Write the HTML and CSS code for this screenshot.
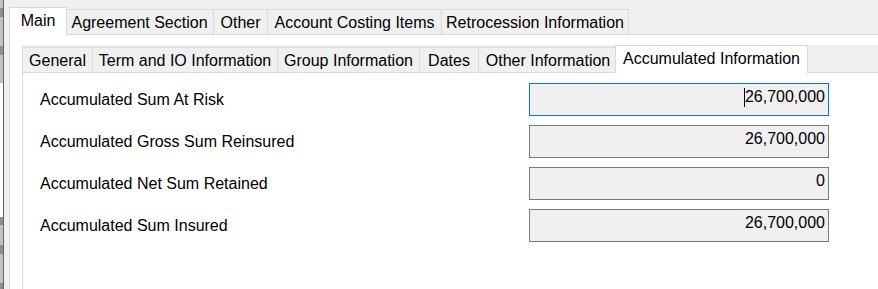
FILE: index.html
```html
<!DOCTYPE html>
<html lang="en">
<head>
  <meta charset="UTF-8" />
  <title>Accumulated Information</title>
  <link rel="stylesheet" href="styles.css">
</head>
<body>
  <div class="side-strip"></div>
  <div class="side-edge"></div>
  <div class="window">
    <div class="tabs outer-tabs">
      <div class="tab tab-main selected">Main</div>
      <div class="tab tab-agreement">Agreement Section</div>
      <div class="tab tab-other">Other</div>
      <div class="tab tab-costing">Account Costing Items</div>
      <div class="tab tab-retro">Retrocession Information</div>
    </div>
    <div class="panel outer-panel">
      <div class="tabs inner-tabs">
        <div class="tab tab-general">General</div>
        <div class="tab tab-term">Term and IO Information</div>
        <div class="tab tab-group">Group Information</div>
        <div class="tab tab-dates">Dates</div>
        <div class="tab tab-otherinfo">Other Information</div>
        <div class="tab tab-accum selected">Accumulated Information</div>
      </div>
      <div class="panel inner-panel">
        <div class="fields">
          <div class="label">Accumulated Sum At Risk</div>
          <div class="box focused"><span class="caret"></span>26,700,000</div>
          <div class="label">Accumulated Gross Sum Reinsured</div>
          <div class="box">26,700,000</div>
          <div class="label">Accumulated Net Sum Retained</div>
          <div class="box">0</div>
          <div class="label">Accumulated Sum Insured</div>
          <div class="box">26,700,000</div>
        </div>
      </div>
    </div>
  </div>
</body>
</html>
```
FILE: styles.css
```css
html, body {
  margin: 0;
  padding: 0;
  height: 100%;
  overflow: hidden;
}
body {
  display: flex;
  background: #f0f0f0;
  color: #000;
  font-family: "Liberation Sans", Arial, sans-serif;
  font-size: 16px;
}
.side-strip {
  width: 3px;
  flex: none;
  background: linear-gradient(to bottom,
    #c2c2c2 0 8px, #8e8e8e 8px 17px, #c2c2c2 17px 46px,
    #8e8e8e 46px 55px, #c2c2c2 55px 83px, #ffffff 83px 217px,
    #8e8e8e 217px 225px, #c2c2c2 225px 245px, #8e8e8e 245px 254px,
    #c2c2c2 254px 283px, #8e8e8e 283px);
}
.side-edge {
  width: 1px;
  flex: none;
  background: #646464;
}
.window {
  flex: 1;
  display: flex;
  flex-direction: column;
  padding: 7px 0 0 5px;
  min-width: 0;
}

/* tab strips */
.tabs {
  display: flex;
  align-items: flex-end;
  height: 27px;
  flex: none;
}
.outer-tabs {
  padding-left: 2px;
}
.inner-tabs {
  background: #f0f0f0;
}
.tab {
  box-sizing: border-box;
  height: 25px;
  display: flex;
  align-items: center;
  justify-content: center;
  padding-top: 1px;
  white-space: nowrap;
  background: #f0f0f0;
  border-top: 1px solid #d9d9d9;
  border-left: 1px solid #d9d9d9;
}
.tab:last-child {
  border-right: 1px solid #d9d9d9;
}
.tab.selected {
  position: relative;
  z-index: 1;
  height: 28px;
  margin: 0 -2px -1px;
  padding-top: 0;
  padding-bottom: 2px;
  background: #fff;
  border-right: 1px solid #d9d9d9;
}

.tab-main { width: 54px; }
.tab-main.selected { width: 58px; }
.tab-agreement { width: 148px; }
.tab-other { width: 54px; }
.tab-costing { width: 174px; }
.tab-retro { width: 188px; }

.tab-general { width: 70px; }
.tab-term { width: 185px; }
.tab-group { width: 142px; }
.tab-dates { width: 59px; }
.tab-otherinfo { width: 139px; }
.tab-accum.selected { width: 193px; }

/* panels */
.panel {
  flex: 1;
  display: flex;
  flex-direction: column;
  background: #fff;
  border-top: 1px solid #d9d9d9;
  border-left: 1px solid #d9d9d9;
}
.outer-panel {
  padding: 10px 0 0 12px;
}
.inner-panel {
  padding: 10px 0 0 17px;
}

/* fields */
.fields {
  display: grid;
  grid-template-columns: 489px 300px;
  grid-auto-rows: 33px;
  row-gap: 9px;
}
.label {
  align-self: center;
  white-space: nowrap;
}
.box {
  box-sizing: border-box;
  display: flex;
  align-items: center;
  justify-content: flex-end;
  padding: 0 3px 6px 0;
  background: #f0f0f0;
  border: 1px solid #7a7a7a;
}
.box.focused {
  border-color: #0078d7;
}
.caret {
  width: 1px;
  height: 19px;
  margin-top: 1px;
  background: #000;
}
```
